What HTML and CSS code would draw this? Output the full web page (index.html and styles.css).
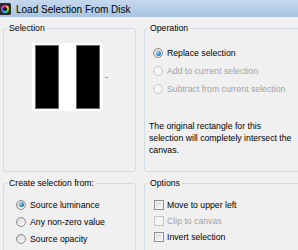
FILE: index.html
```html
<!DOCTYPE html>
<html lang="en">
<head>
<meta charset="utf-8">
<title>Load Selection From Disk</title>
<link rel="stylesheet" href="styles.css">
</head>
<body>
<div class="titlebar">
  <span class="app-icon"><span class="lens"></span></span>
  <span class="title">Load Selection From Disk</span>
</div>
<div class="client">
  <fieldset class="group sel">
    <legend>Selection</legend>
    <div class="preview-row">
      <div class="preview"><div class="bar"></div><div class="bar"></div></div>
      <span class="tick"></span>
    </div>
  </fieldset>
  <fieldset class="group op">
    <legend>Operation</legend>
    <div class="choices">
      <label class="opt"><span class="radio checked"></span>Replace selection</label>
      <label class="opt disabled"><span class="radio"></span>Add to current selection</label>
      <label class="opt disabled"><span class="radio"></span>Subtract from current selection</label>
    </div>
    <p class="note">The original rectangle for this selection will completely intersect the canvas.</p>
  </fieldset>
  <fieldset class="group create">
    <legend>Create selection from:</legend>
    <div class="choices">
      <label class="opt"><span class="radio checked"></span>Source luminance</label>
      <label class="opt"><span class="radio"></span>Any non-zero value</label>
      <label class="opt"><span class="radio"></span>Source opacity</label>
    </div>
  </fieldset>
  <fieldset class="group opts">
    <legend>Options</legend>
    <div class="choices">
      <label class="opt"><span class="check"></span>Move to upper left</label>
      <label class="opt disabled"><span class="check"></span>Clip to canvas</label>
      <label class="opt"><span class="check"></span>Invert selection</label>
    </div>
  </fieldset>
</div>
</body>
</html>
```
FILE: styles.css
```css
html, body { margin: 0; }
body {
  width: 298px;
  height: 250px;
  overflow: hidden;
  background: #f0f0f0;
  font-family: "Liberation Sans", Arial, sans-serif;
  font-size: 8.7px;
  color: #000;
}
.titlebar {
  height: 17px;
  display: flex;
  align-items: center;
  gap: 5px;
  background: linear-gradient(#c5d8ed, #a9c4e1);
}
.app-icon {
  width: 12px;
  height: 12px;
  margin-left: -1px;
  background: #2b2b2b;
  border-radius: 2px;
  display: flex;
  align-items: center;
  justify-content: center;
  flex: none;
}
.lens {
  width: 8px;
  height: 8px;
  border-radius: 50%;
  background: radial-gradient(circle, #1e1e1e 0 28%, transparent 34%),
    conic-gradient(#f33, #fc3, #3c3, #3cf, #36f, #c3f, #f33);
}
.title { font-size: 10px; padding-top: 1px; }

.client {
  display: grid;
  grid-template-columns: 133px 162px;
  grid-template-rows: 149px 80px;
  column-gap: 8px;
  row-gap: 6px;
  padding: 6px 0 0 3px;
}
.group {
  margin: 0;
  padding: 0;
  min-width: 0;
  border: 1px solid #d2dce3;
  border-radius: 3px;
}
.group legend {
  padding: 0 2px;
  margin-left: 3px;
  line-height: 11px;
}
.preview-row {
  display: flex;
  align-items: center;
  margin: 9px 0 0 28px;
}
.preview {
  display: flex;
  gap: 17px;
  padding: 2px 3px;
  background: #fff;
}
.bar {
  width: 22px;
  height: 62px;
  background: #000;
  border: 1px solid #666;
}
.tick {
  width: 3px;
  height: 1px;
  margin-left: 2px;
  background: #a0a0a0;
}
.choices { display: flex; flex-direction: column; }
.opt { display: flex; align-items: center; gap: 4px; height: 18px; }
.op .choices { padding: 10px 0 0 8px; }
.create .choices { padding: 7px 0 0 12px; }
.create .opt { height: 17px; }
.opts .choices { padding: 8px 0 0 9px; }
.opts .opt { height: 16px; gap: 3px; }
.disabled { color: #a3a3a3; }

.radio {
  width: 10px;
  height: 10px;
  box-sizing: border-box;
  border-radius: 50%;
  border: 1px solid #8c8c8c;
  background: linear-gradient(135deg, #d4d4d4, #fdfdfd);
  display: flex;
  align-items: center;
  justify-content: center;
  flex: none;
}
.radio.checked::after {
  content: "";
  width: 5px;
  height: 5px;
  border-radius: 50%;
  background: radial-gradient(circle at 35% 35%, #a6dcff, #2a86cc 55%, #0c4a85);
}
.disabled .radio { border-color: #c8c8c8; background: #f5f5f5; }
.check {
  width: 10px;
  height: 10px;
  box-sizing: border-box;
  border: 1px solid #8e8f8f;
  background: linear-gradient(135deg, #d6d6d6, #fafafa);
  box-shadow: inset 0 0 0 1px #f7f7f7;
  flex: none;
}
.disabled .check { border-color: #c6c6c6; background: #f4f4f4; box-shadow: none; }
.note {
  margin: 22px 0 0 4px;
  width: 146px;
  line-height: 12px;
}
```
